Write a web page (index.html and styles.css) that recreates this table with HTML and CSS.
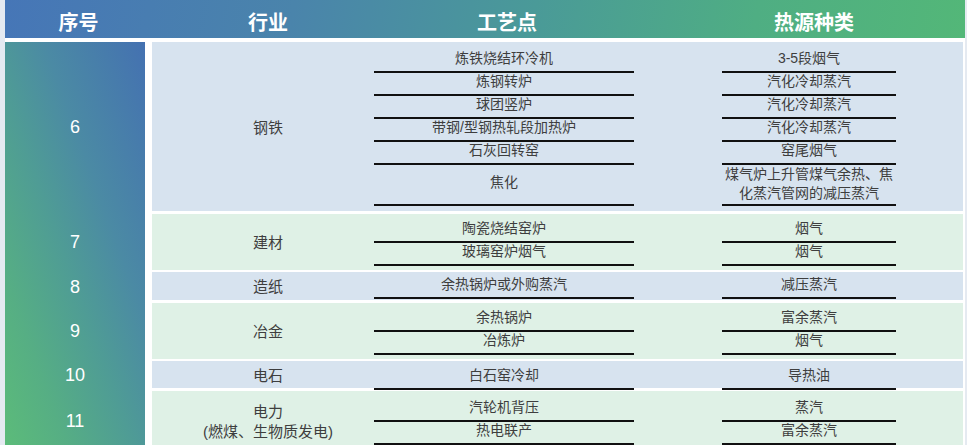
FILE: index.html
```html
<!DOCTYPE html>
<html lang="zh">
<head>
<meta charset="utf-8">
<title>余热热源</title>
<link rel="stylesheet" href="styles.css">
</head>
<body>
<div class="page">
  <div class="thead">
    <div class="th th-no">序号</div>
    <div class="th th-ind">行业</div>
    <div class="th th-proc">工艺点</div>
    <div class="th"></div>
    <div class="th th-heat">热源种类</div>
  </div>
  <div class="tbody">
    <div class="numbar"></div>
    <div class="num g1">6</div>
    <div class="num g2">7</div>
    <div class="num g3">8</div>
    <div class="num g4">9</div>
    <div class="num g5">10</div>
    <div class="num g6">11</div>

    <div class="row blue g1">
      <div class="ind">钢铁</div>
      <div class="subs p1">
        <div class="c">炼铁烧结环冷机</div><div class="c">3-5段烟气</div>
        <div class="c">炼钢转炉</div><div class="c">汽化冷却蒸汽</div>
        <div class="c">球团竖炉</div><div class="c">汽化冷却蒸汽</div>
        <div class="c">带钢/型钢热轧段加热炉</div><div class="c">汽化冷却蒸汽</div>
        <div class="c">石灰回转窑</div><div class="c">窑尾烟气</div>
        <div class="c">焦化</div><div class="c tall">煤气炉上升管煤气余热、焦<br>化蒸汽管网的减压蒸汽</div>
      </div>
    </div>

    <div class="row green g2">
      <div class="ind">建材</div>
      <div class="subs p2">
        <div class="c">陶瓷烧结窑炉</div><div class="c">烟气</div>
        <div class="c">玻璃窑炉烟气</div><div class="c">烟气</div>
      </div>
    </div>

    <div class="row blue g3">
      <div class="ind">造纸</div>
      <div class="subs p3">
        <div class="c">余热锅炉或外购蒸汽</div><div class="c">减压蒸汽</div>
      </div>
    </div>

    <div class="row green g4">
      <div class="ind">冶金</div>
      <div class="subs p4">
        <div class="c">余热锅炉</div><div class="c">富余蒸汽</div>
        <div class="c">冶炼炉</div><div class="c">烟气</div>
      </div>
    </div>

    <div class="row blue g5">
      <div class="ind">电石</div>
      <div class="subs p5">
        <div class="c">白石窑冷却</div><div class="c">导热油</div>
      </div>
    </div>

    <div class="row green g6">
      <div class="ind">电力<br>(燃煤、生物质发电)</div>
      <div class="subs p6">
        <div class="c">汽轮机背压</div><div class="c">蒸汽</div>
        <div class="c">热电联产</div><div class="c">富余蒸汽</div>
      </div>
    </div>
  </div>
</div>
</body>
</html>
```
FILE: styles.css
```css
html, body {
  margin: 0;
  padding: 0;
}
body {
  background: #e5eaf1;
  font-family: "Liberation Sans", "Noto Sans CJK SC", sans-serif;
  color: #3e3e3e;
  overflow: hidden;
}
.page {
  margin-left: 5px;
  width: 960px;
  background: #ffffff;
  height: 460px;
}
.thead {
  display: grid;
  grid-template-columns: 147px 222px 260px 88px 174px 1fr;
  height: 38px;
  background: linear-gradient(100deg, #4676b7 0%, #4a84ab 30%, #4a9a98 55%, #4fae83 78%, #53b778 100%);
}
.th {
  color: #ffffff;
  font-family: "Noto Sans CJK SC", sans-serif;
  font-weight: 700;
  font-size: 20px;
  line-height: 24px;
  padding-top: 10px;
  text-align: center;
}
.th-ind { padding-left: 10px; }
.th-proc { padding-left: 6px; }
.th-heat { padding-left: 10px; }

.tbody {
  display: grid;
  grid-template-columns: 140px 811px;
  grid-template-rows: 169px 56px 28px 56px 27px 60px;
  column-gap: 7px;
  row-gap: 2.5px;
  margin-top: 4px;
}
.numbar {
  grid-column: 1;
  grid-row: 1 / -1;
  background: linear-gradient(250deg, #4471b1 0%, #4b8aa4 35%, #4f9c95 55%, #56ae84 78%, #5cbc79 100%);
}
.num {
  grid-column: 1;
  display: flex;
  align-items: center;
  justify-content: center;
  color: #ffffff;
  font-size: 18px;
  padding-top: 2px;
}
.g1 { grid-row: 1; }
.g2 { grid-row: 2; }
.g3 { grid-row: 3; }
.g4 { grid-row: 4; }
.g5 { grid-row: 5; }
.g6 { grid-row: 6; }

.row {
  grid-column: 2;
  display: flex;
}
.blue { background: #d7e3ef; }
.green { background: #dff1e6; }

.ind {
  width: 222px;
  box-sizing: border-box;
  padding-left: 10px;
  display: flex;
  align-items: center;
  justify-content: center;
  text-align: center;
  font-size: 15px;
  line-height: 20px;
  padding-top: 2px;
}
.subs {
  display: grid;
  grid-template-columns: 260px 174px;
  column-gap: 88px;
  align-content: start;
}
.c {
  border-bottom: 2px solid #111111;
  padding-bottom: 4px;
  line-height: 17px;
  font-size: 14px;
  display: flex;
  align-items: center;
  justify-content: center;
  text-align: center;
}
.c.tall {
  line-height: 19px;
  padding-bottom: 1px;
}
.p1 { padding-top: 8px; }
.p2 { padding-top: 6px; }
.p3 { padding-top: 3.5px; }
.p4 { padding-top: 6.5px; }
.p5 { padding-top: 5.5px; }
.p6 { padding-top: 8.5px; }
```
